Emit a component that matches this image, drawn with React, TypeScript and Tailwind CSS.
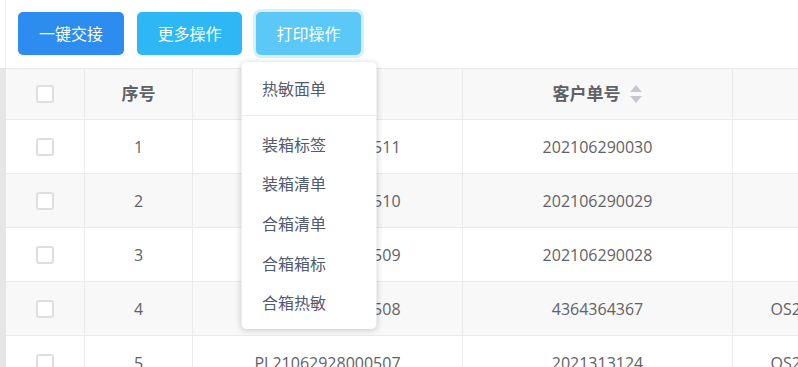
const rows = [
    { no: 1, pl: "PL21062928000511", customer: "202106290030", os: "" },
    { no: 2, pl: "PL21062928000510", customer: "202106290029", os: "" },
    { no: 3, pl: "PL21062928000509", customer: "202106290028", os: "" },
    { no: 4, pl: "PL21062928000508", customer: "4364364367", os: "OS210629000025" },
    { no: 5, pl: "PL21062928000507", customer: "2021313124", os: "OS210629000024" },
];

const printItems = ["装箱标签", "装箱清单", "合箱清单", "合箱箱标", "合箱热敏"];

function Checkbox() {
    return <span className="block h-[18px] w-[18px] rounded-[3px] border-2 border-[#dcdee2] bg-white" />;
}

function SortIcon() {
    return (
        <svg className="ml-[8px] h-[18px] w-[14px]" viewBox="0 0 14 18" fill="#c5c8ce">
            <path d="M7 0L13 7H1z" />
            <path d="M7 18L13 11H1z" />
        </svg>
    );
}

export default function App() {
    return (
        <div
            className="flex h-[367px] w-[798px] overflow-hidden bg-white text-[16px]"
            style={{ fontFamily: '"Open Sans", "Noto Sans CJK SC", sans-serif' }}
        >
            {/* left edge */}
            <div className="flex w-[6px] shrink-0 flex-col">
                <div className="h-[68px] border-r border-[#eeeeee]" />
                <div className="flex-1 bg-[#e6e6e6]" />
            </div>

            <div className="flex min-w-0 flex-1 flex-col">
                {/* toolbar */}
                <div className="flex h-[68px] shrink-0 items-start pl-[12px] pt-[12px]">
                    <button className="h-[43px] w-[106px] rounded-[5px] bg-[#2d8cf0] text-white">一键交接</button>
                    <button className="ml-[13px] h-[43px] w-[105px] rounded-[5px] bg-[#2db7f5] text-white">更多操作</button>
                    <div className="relative ml-[14px]">
                        <button className="h-[43px] w-[105px] rounded-[5px] bg-[#5bc8f8] text-white ring-[3px] ring-[#2db7f5]/20">
                            打印操作
                        </button>
                        <div className="absolute left-1/2 top-[50px] z-10 w-[135px] -translate-x-1/2 rounded-[5px] bg-white pb-[6px] pt-[7px] text-[#515a6e] shadow-[0_1px_6px_rgba(0,0,0,0.2)]">
                            <div className="flex h-[40px] items-center pl-[21px]">热敏面单</div>
                            <div className="mb-[9px] mt-[6px] h-px bg-[#e8eaec]" />
                            {printItems.map((item) => (
                                <div key={item} className="flex h-[39.6px] items-center pl-[21px]">
                                    {item}
                                </div>
                            ))}
                        </div>
                    </div>
                </div>

                {/* table */}
                <div className="border-t border-[#e8eaec] text-[#606266]">
                    <div className="flex h-[51px] border-b border-[#e8eaec] bg-[#f8f8f9] text-[17px] font-bold text-[#5f6166]">
                        <div className="flex w-[79px] shrink-0 items-center justify-center border-r border-[#e8eaec]">
                            <Checkbox />
                        </div>
                        <div className="flex w-[108px] shrink-0 items-center justify-center border-r border-[#e8eaec]">序号</div>
                        <div className="w-[270px] shrink-0 border-r border-[#e8eaec]" />
                        <div className="flex w-[270px] shrink-0 items-center justify-center border-r border-[#e8eaec]">
                            客户单号
                            <SortIcon />
                        </div>
                        <div className="w-[206px] shrink-0" />
                    </div>
                    {rows.map((row) => (
                        <div
                            key={row.no}
                            className={
                                "flex h-[54px] border-b border-[#e8eaec] " + (row.no % 2 === 0 ? "bg-[#f8f8f9]" : "bg-white")
                            }
                        >
                            <div className="flex w-[79px] shrink-0 items-center justify-center border-r border-[#e8eaec]">
                                <Checkbox />
                            </div>
                            <div className="flex w-[108px] shrink-0 items-center justify-center border-r border-[#e8eaec]">{row.no}</div>
                            <div className="flex w-[270px] shrink-0 items-center justify-center border-r border-[#e8eaec]">{row.pl}</div>
                            <div className="flex w-[270px] shrink-0 items-center justify-center border-r border-[#e8eaec]">{row.customer}</div>
                            <div className="flex w-[206px] shrink-0 items-center justify-center">{row.os}</div>
                        </div>
                    ))}
                </div>
            </div>
        </div>
    );
}
